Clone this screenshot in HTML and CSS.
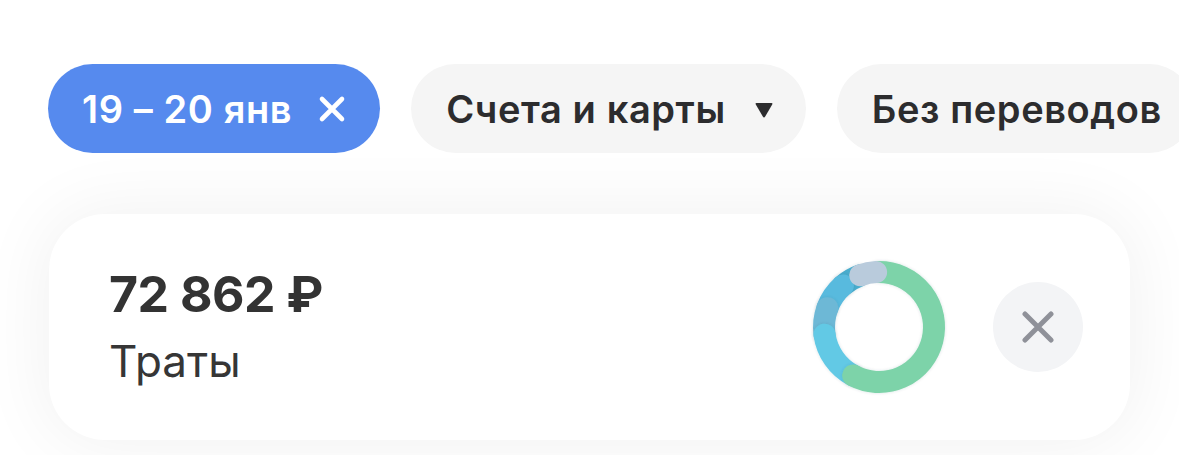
FILE: index.html
```html
<!DOCTYPE html>
<html lang="ru">
<head>
<meta charset="utf-8">
<link rel="stylesheet" href="styles.css">
</head>
<body>
<div class="page">
  <header class="filters">
    <div class="chip chip-active">
      <span class="chip-text">19 – 20 янв</span>
      <svg class="chip-x" viewBox="0 0 28 28" width="28" height="28"><path d="M4 4 L24 24 M24 4 L4 24" stroke="#fff" stroke-width="4.6" stroke-linecap="round" fill="none"/></svg>
    </div>
    <div class="chip">
      <span class="chip-text">Счета и карты</span>
      <svg class="chip-caret" viewBox="0 0 20 18" width="20" height="18"><path d="M2.5 2 H17.5 Q19 2 18.2 3.4 L11.2 15.5 Q10 17.3 8.8 15.5 L1.8 3.4 Q1 2 2.5 2 Z" fill="#2c2c2e"/></svg>
    </div>
    <div class="chip">
      <span class="chip-text">Без переводов</span>
    </div>
  </header>
  <main class="content">
    <section class="card">
      <div class="summary">
        <div class="amount">72 862 ₽</div>
        <div class="label">Траты</div>
      </div>
      <svg class="donut" viewBox="0 0 140 140" width="140" height="140">
        <defs>
          <filter id="sh" filterUnits="userSpaceOnUse" x="0" y="0" width="140" height="140">
            <feDropShadow dx="0" dy="0" stdDeviation="1.8" flood-color="#1c4a5a" flood-opacity="0.16"/>
          </filter>
        </defs>
        <g fill="none" stroke-width="22" stroke-linecap="round">
          <path d="M51.19 18.32 A55 55 0 0 0 33.92 28.49" stroke="#4aaccd" filter="url(#sh)"/>
          <path d="M33.92 28.49 A55 55 0 0 0 18.32 51.19" stroke="#58bade" filter="url(#sh)"/>
          <path d="M18.32 51.19 A55 55 0 0 0 15.53 77.65" stroke="#6db8d6" filter="url(#sh)"/>
          <path d="M15.53 77.65 A55 55 0 0 0 44.18 118.56" stroke="#62c9e5" filter="url(#sh)"/>
          <path d="M70 15 A55 55 0 1 1 44.18 118.56" stroke="#7dd3a9" filter="url(#sh)"/>
          <path d="M51.19 18.32 A55 55 0 0 1 67.12 15.08" stroke="#b9cbdc"/>
        </g>
      </svg>
      <button class="close" type="button" aria-label="Закрыть">
        <svg viewBox="0 0 32 32" width="32" height="32"><path d="M3 3 L29 29 M29 3 L3 29" stroke="#8f9199" stroke-width="5" stroke-linecap="round" fill="none"/></svg>
      </button>
    </section>
  </main>
</div>
</body>
</html>
```
FILE: styles.css
```css
* { box-sizing: border-box; }
html, body {
  margin: 0;
  padding: 0;
  background: #ffffff;
  font-family: Inter, "Noto Sans", "DejaVu Sans", sans-serif;
  overflow: hidden;
}
.page {
  width: 1179px;
  height: 455px;
  overflow: hidden;
  position: relative;
}
.filters {
  position: relative;
  z-index: 2;
  background: #ffffff;
  display: flex;
  gap: 31px;
  padding: 64px 0 0 48px;
  height: 153px;
  white-space: nowrap;
}
.chip {
  flex: none;
  height: 89px;
  border-radius: 45px;
  background: #f5f5f5;
  display: flex;
  align-items: center;
  gap: 28px;
  padding: 0 32px 0 35px;
  color: #2c2c2e;
}
.chip-text {
  font-size: 38px;
  font-weight: 600;
  letter-spacing: 0.6px;
}
.chip-active {
  background: #568aee;
  color: #ffffff;
  padding: 0 34px 0 34px;
  gap: 26px;
}
.chip-x { display: block; }
.chip-caret { display: block; margin-top: 2px; }
.content {
  position: relative;
  z-index: 1;
  padding: 61px 0 0 49px;
}
.card {
  width: 1081px;
  height: 226px;
  border-radius: 56px;
  background: #ffffff;
  box-shadow: 0 0 70px 6px rgba(0, 0, 0, 0.055);
  display: flex;
  align-items: center;
  padding: 0 47px 0 60px;
}
.summary {
  flex: 1;
  display: flex;
  flex-direction: column;
  gap: 13px;
  padding-bottom: 3px;
  color: #333333;
}
.amount {
  font-size: 50px;
  font-weight: 700;
  line-height: 58px;
  letter-spacing: -0.5px;
}
.label {
  font-size: 44px;
  font-weight: 400;
  line-height: 50px;
  color: #363636;
}
.donut {
  display: block;
  margin-right: 44px;
}
.close {
  width: 90px;
  height: 90px;
  border-radius: 50%;
  border: none;
  background: #f3f4f6;
  display: flex;
  align-items: center;
  justify-content: center;
  padding: 0;
}
.close svg { display: block; }
```
